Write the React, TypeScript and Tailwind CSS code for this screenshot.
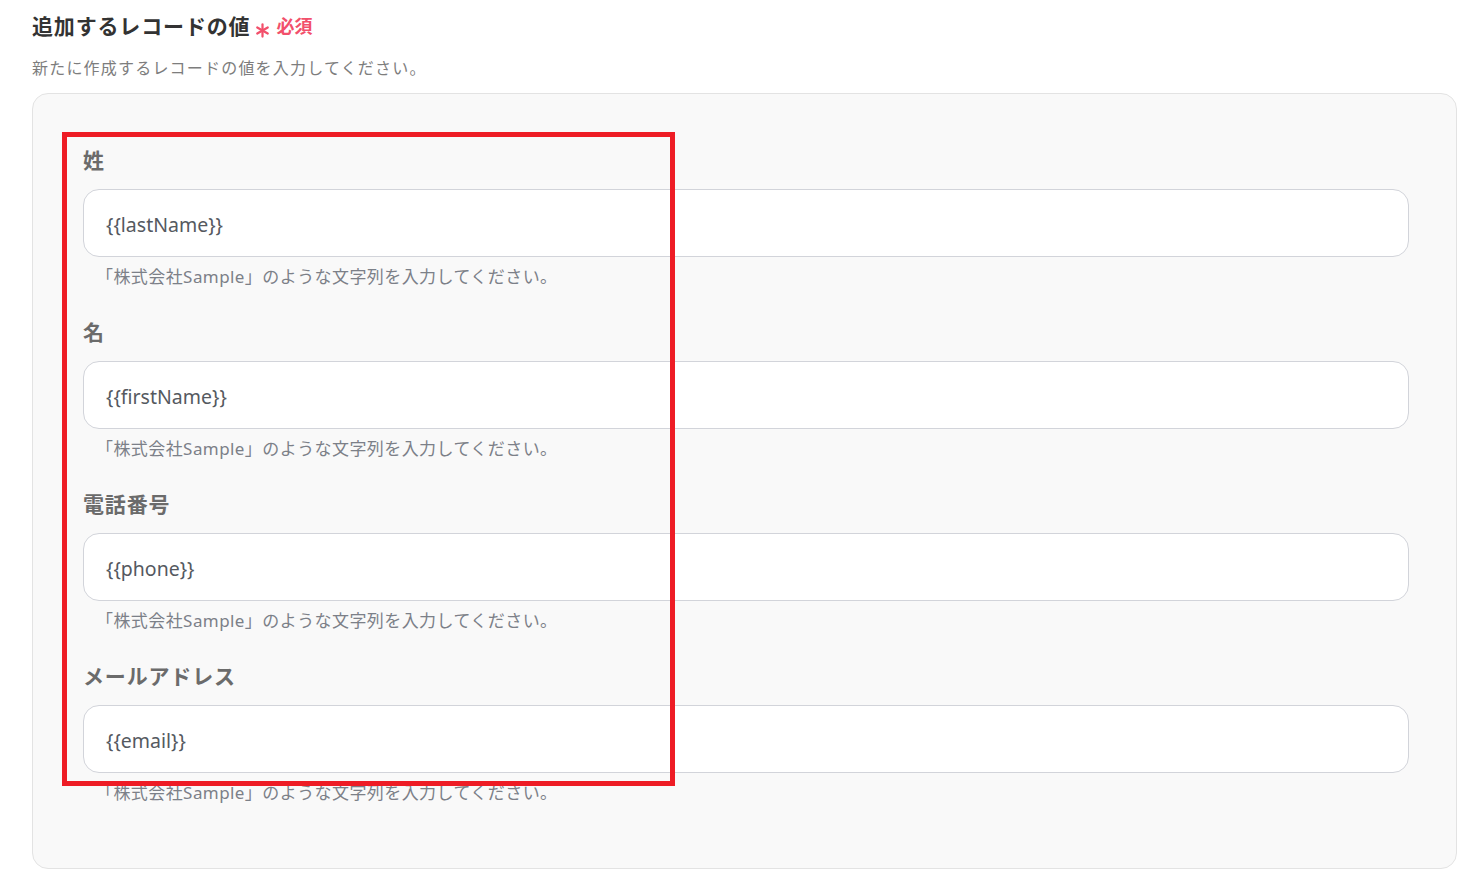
import React from "react";

const fields = [
  { label: "姓", value: "{{lastName}}" },
  { label: "名", value: "{{firstName}}" },
  { label: "電話番号", value: "{{phone}}" },
  { label: "メールアドレス", value: "{{email}}" },
];

const font = { fontFamily: '"Noto Sans", "Noto Sans CJK JP", sans-serif' };

export default function App() {
  return (
    <div className="relative w-[1457px] h-[876px] overflow-hidden bg-white pt-[10px] pl-[32px]" style={font}>
      <div className="flex items-center h-[32px]">
        <span className="text-[21px] font-bold text-[#333333] tracking-[0.04em] leading-[32px]">追加するレコードの値</span>
        <svg className="ml-[5px] mt-[8px]" width="15" height="15" viewBox="0 0 16 16" fill="none" stroke="#f2506b" strokeWidth="2.4" strokeLinecap="round">
          <line x1="8" y1="1.5" x2="8" y2="14.5" />
          <line x1="2.4" y1="4.75" x2="13.6" y2="11.25" />
          <line x1="2.4" y1="11.25" x2="13.6" y2="4.75" />
        </svg>
        <span className="ml-[6px] text-[18px] font-bold text-[#f2506b] leading-[32px]">必須</span>
      </div>
      <div className="mt-[14px] text-[16px] leading-[24px] text-[#7d7d7d] tracking-[0.075em]">
        新たに作成するレコードの値を入力してください。
      </div>
      <div className="mt-[13px] w-[1425px] rounded-[16px] border border-[#e3e3e3] bg-[#f9f9f9] pt-[51px] pb-[63px] pl-[50px] pr-[47px] flex flex-col gap-[28px]">
        {fields.map((f) => (
          <div key={f.label} className="flex flex-col">
            <div className="text-[21px] font-bold text-[#6b6b6b] tracking-[0.04em] leading-[30px]">{f.label}</div>
            <div className="mt-[14px] h-[68px] w-[1326px] rounded-[16px] border border-[#d2d4da] bg-white flex items-center pl-[22px] pt-[4px] text-[19.5px] text-[#55595f]">
              {f.value}
            </div>
            <div className="mt-[8px] pl-[13px] text-[17px] leading-[24px] text-[#7c8088] tracking-[0.025em]">
              「株式会社Sample」のような文字列を入力してください。
            </div>
          </div>
        ))}
      </div>
      <div className="absolute left-[62px] top-[132px] w-[613px] h-[654px] border-[5px] border-[#ee1c25]" />
    </div>
  );
}
